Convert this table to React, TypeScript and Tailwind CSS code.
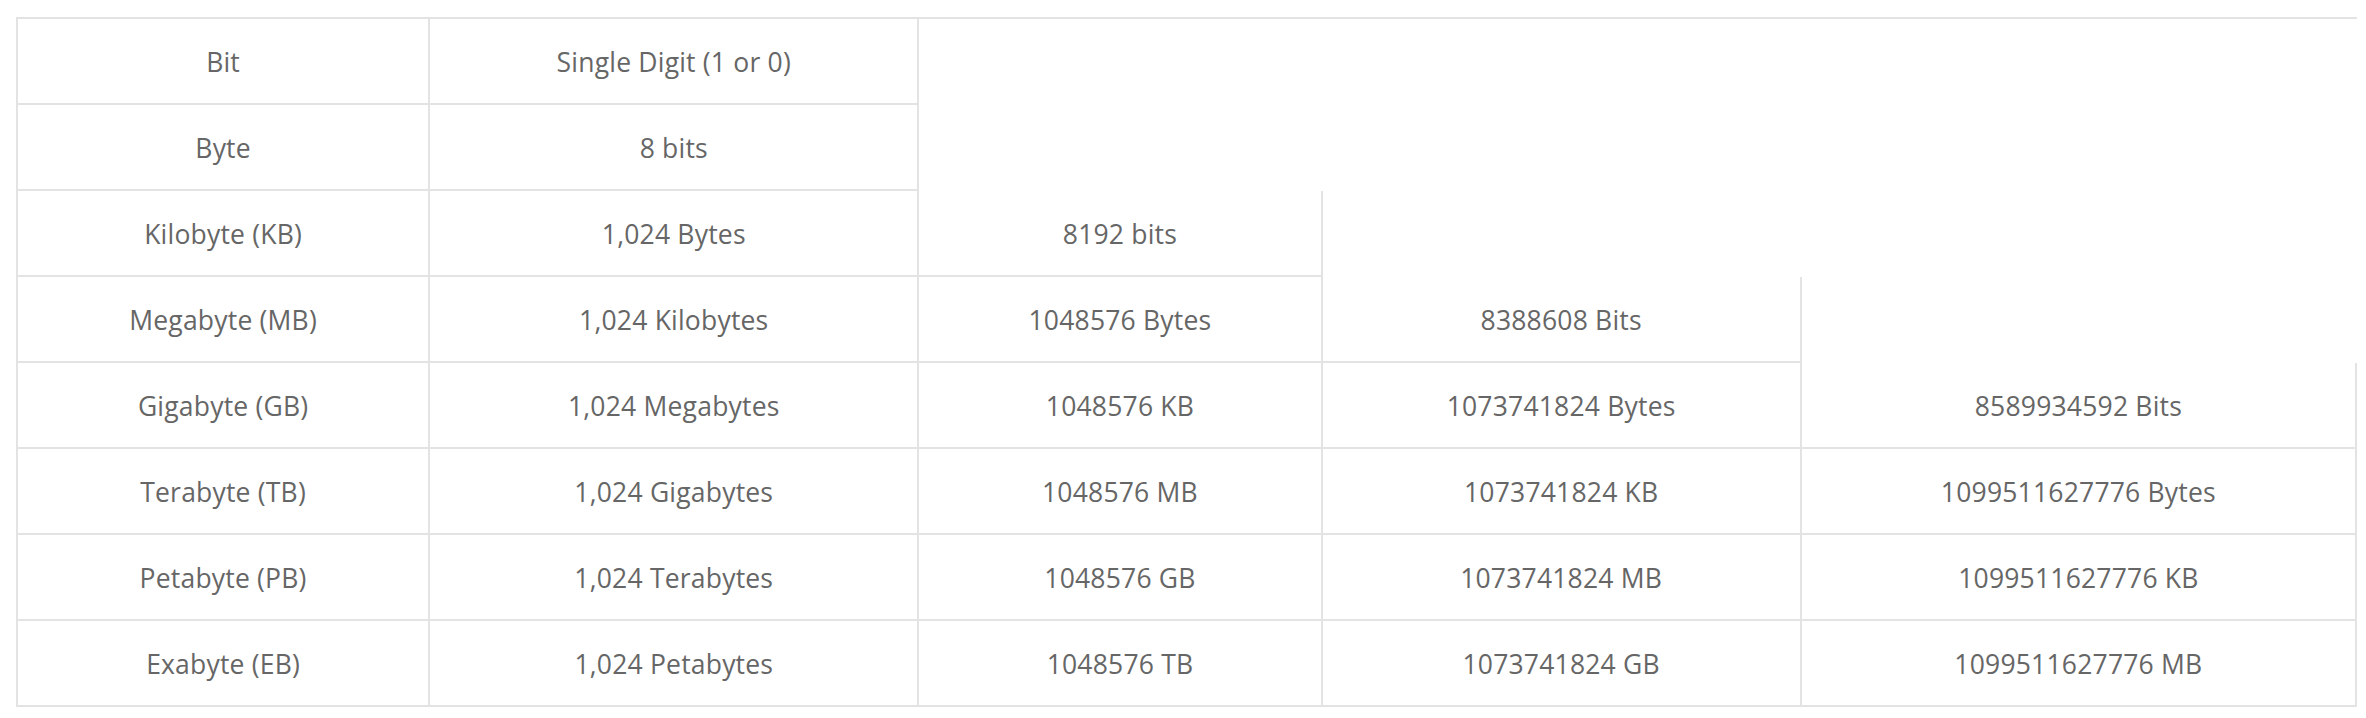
const rows: string[][] = [
  ["Bit", "Single Digit (1 or 0)"],
  ["Byte", "8 bits"],
  ["Kilobyte (KB)", "1,024 Bytes", "8192 bits"],
  ["Megabyte (MB)", "1,024 Kilobytes", "1048576 Bytes", "8388608 Bits"],
  ["Gigabyte (GB)", "1,024 Megabytes", "1048576 KB", "1073741824 Bytes", "8589934592 Bits"],
  ["Terabyte (TB)", "1,024 Gigabytes", "1048576 MB", "1073741824 KB", "1099511627776 Bytes"],
  ["Petabyte (PB)", "1,024 Terabytes", "1048576 GB", "1073741824 MB", "1099511627776 KB"],
  ["Exabyte (EB)", "1,024 Petabytes", "1048576 TB", "1073741824 GB", "1099511627776 MB"],
];

export default function App() {
  return (
    <div className="min-h-screen bg-white pl-4 pt-[17px] font-['Open_Sans',sans-serif] text-[#666]">
      <table className="table-fixed border-separate border-spacing-0 border-t-2 border-l-2 border-[#e3e3e3] w-[2341px]">
        <colgroup>
          <col className="w-[412px]" />
          <col className="w-[489px]" />
          <col className="w-[403px]" />
          <col className="w-[479px]" />
          <col className="w-[555px]" />
        </colgroup>
        <tbody>
          {rows.map((row, i) => (
            <tr key={i}>
              {row.map((cell, j) => (
                <td
                  key={j}
                  className="h-[86px] border-r-2 border-b-2 border-[#e3e3e3] pt-[2px] text-center align-middle text-[26.5px] leading-none tracking-[0.2px]"
                >
                  {cell}
                </td>
              ))}
            </tr>
          ))}
        </tbody>
      </table>
    </div>
  );
}
